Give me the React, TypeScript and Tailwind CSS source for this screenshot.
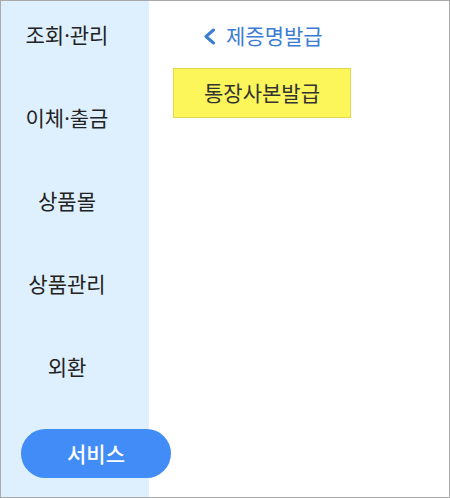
const menuItems = ["조회·관리", "이체·출금", "상품몰", "상품관리", "외환"];

const BackChevron = () => (
  <svg width="13" height="17" viewBox="0 0 13 17" fill="none" className="shrink-0">
    <path d="M10.5 2 L3 8.5 L10.5 15" stroke="currentColor" strokeWidth="3" strokeLinecap="round" strokeLinejoin="round" />
  </svg>
);

const App = () => {
  return (
    <div
      className="w-[450px] h-[498px] border border-[#a9a9a9] flex overflow-hidden bg-white"
      style={{ fontFamily: '"Noto Sans", "Noto Sans CJK KR", sans-serif' }}
    >
      {/* Left menu */}
      <aside className="relative z-10 w-[148px] shrink-0 bg-[#def0fd] pt-[22px] flex flex-col">
        <ul className="w-[132px] flex flex-col gap-[59px] text-center">
          {menuItems.map((item) => (
            <li key={item} className="text-[21px] leading-[24px] text-[#222]">
              {item}
            </li>
          ))}
        </ul>
        <button className="mt-[50px] ml-[20px] w-[150px] h-[49px] shrink-0 rounded-full bg-[#418cf6] text-white text-[21px] leading-[24px] font-medium">
          서비스
        </button>
      </aside>

      {/* Content */}
      <main className="flex-1 pl-[24px] pt-[23px]">
        <div className="flex items-center h-[24px] ml-[30px] text-[#3c7dd2]">
          <BackChevron />
          <span className="ml-[10px] text-[21px] leading-[24px]">제증명발급</span>
        </div>
        <div className="mt-[20px] w-[178px] h-[50px] border border-[#e4d84a] bg-[#fcf65a] flex items-center justify-center">
          <span className="text-[21px] leading-[24px] text-[#333]">통장사본발급</span>
        </div>
      </main>
    </div>
  );
};

export default App;
